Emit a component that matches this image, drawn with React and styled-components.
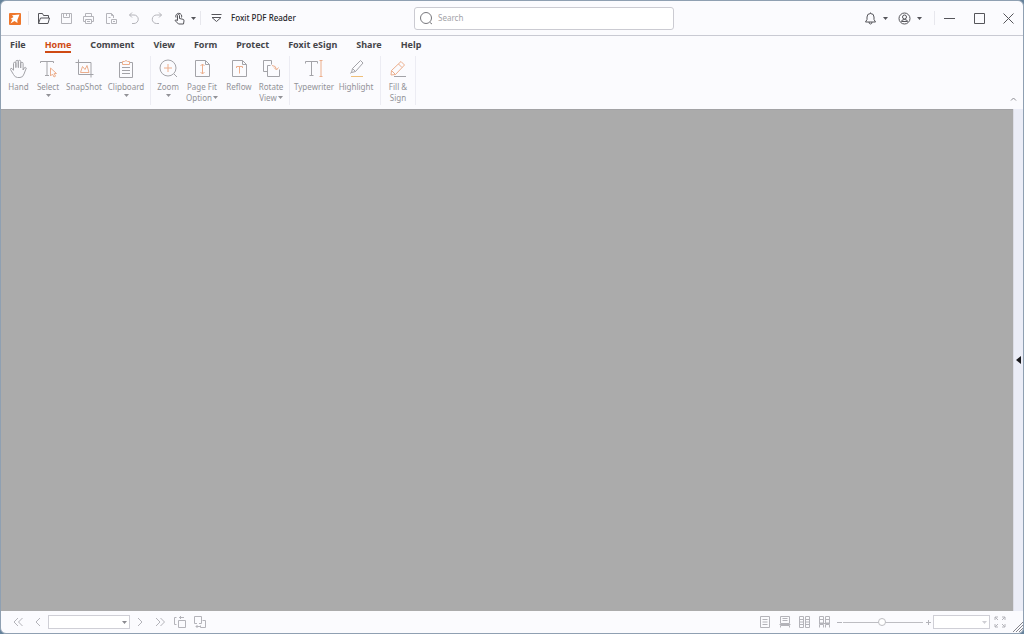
import React from "react";
import styled, { createGlobalStyle } from "styled-components";

const GlobalStyle = createGlobalStyle`
  * { box-sizing: border-box; }
  body { margin: 0; background: #66839c; }
  body, button, input, select { font-family: "Noto Sans", "Open Sans", sans-serif; }
`;

const Window = styled.div`
  display: flex;
  flex-direction: column;
  height: 100vh;
  border: 1px solid #8fa0b2;
  border-radius: 6px;
  overflow: hidden;
  background: #fbfbfe;
  color: #3c3c40;
`;

const TitleBar = styled.header`
  display: flex;
  align-items: center;
  height: 35px;
  flex: none;
  border-bottom: 1px solid #c9cad3;
`;

const TitleStart = styled.div`
  display: flex;
  align-items: center;
  flex: 0 1 413px;
  padding-left: 7px;
`;

const QuickTools = styled.div`
  display: grid;
  grid-template-columns: repeat(7, 1fr);
  width: 159px;
  margin-left: 3px;
`;

const IconButton = styled.button`
  display: flex;
  align-items: center;
  justify-content: center;
  flex: none;
  width: ${(p) => p.$w ? p.$w + "px" : "auto"};
  height: 20px;
  padding: 0;
  border: 0;
  background: none;
  color: ${(p) => (p.$dim ? "#b4b4ba" : "#55555a")};
`;

const Divider = styled.span`
  flex: none;
  width: 1px;
  height: 14px;
  background: #e7e7ed;
`;

const AppTitle = styled.h1`
  margin: 0;
  font-size: 8px;
  line-height: 12px;
  font-weight: 500;
  color: #26262a;
  white-space: nowrap;
`;

const SearchBox = styled.label`
  display: flex;
  align-items: center;
  gap: 5px;
  flex: 0 1 260px;
  height: 23px;
  padding: 0 5px;
  border: 1px solid #cbcbd2;
  border-radius: 3px;
  background: #fff;
  color: #77777c;
`;

const SearchInput = styled.input`
  flex: 1;
  min-width: 0;
  padding: 0;
  border: 0;
  outline: 0;
  background: none;
  font-size: 8px;
  line-height: 12px;
  &::placeholder { color: #a3a3a8; opacity: 1; }
`;

const TitleEnd = styled.div`
  display: flex;
  align-items: center;
  margin-left: auto;
`;

const Tabs = styled.nav`
  display: flex;
  gap: 19px;
  height: 20px;
  flex: none;
  padding: 2px 9px 0;
`;

const Tab = styled.a`
  height: 15px;
  border-bottom: 2px solid ${(p) => (p.$active ? "#cf4a14" : "transparent")};
  font-size: 9px;
  line-height: 14px;
  font-weight: 700;
  text-decoration: none;
  white-space: nowrap;
  color: ${(p) => (p.$active ? "#cf4a14" : "#454549")};
`;

const Ribbon = styled.div`
  display: flex;
  height: 53px;
  flex: none;
`;

const Group = styled.div`
  display: flex;
  height: 49px;
  padding: 0 3px;
  border-right: 1px solid #ececf3;
`;

const ToolButton = styled.button`
  display: flex;
  flex-direction: column;
  align-items: center;
  width: ${(p) => p.$w}px;
  padding: 3px 0 0;
  border: 0;
  background: none;
  color: #929297;
  font-size: 8px;
  line-height: 11px;
  white-space: nowrap;
`;

const ToolLabel = styled.span`
  display: flex;
  align-items: center;
  gap: 1px;
`;

const DropMark = styled.span`
  display: flex;
  padding-top: 2px;
`;

const IconSlot = styled.span`
  display: flex;
  height: 22px;
  color: #a3a3a8;
`;

const RibbonEnd = styled.div`
  display: flex;
  align-items: flex-end;
  margin-left: auto;
`;

const Workspace = styled.main`
  display: flex;
  flex: 1;
  min-height: 0;
`;

const Canvas = styled.section`
  flex: 1;
  background: #ababab;
  border-top: 1px solid #a2a2a5;
`;

const SideRail = styled.aside`
  display: flex;
  align-items: center;
  width: 10px;
  border-left: 1px solid #dcdde6;
  background: #ebedf7;
`;

const StatusBar = styled.footer`
  display: flex;
  align-items: center;
  justify-content: space-between;
  height: 22px;
  flex: none;
  padding-left: 7px;
`;

const StatusGroup = styled.div`
  display: flex;
  align-items: center;
`;

const Picker = styled.label`
  position: relative;
  display: flex;
  width: ${(p) => p.$w}px;
  color: ${(p) => (p.$dim ? "#cfcfd4" : "#8b8b90")};
  svg { position: absolute; right: 3px; top: 6px; pointer-events: none; }
`;

const Select = styled.select`
  width: 100%;
  height: 14px;
  padding: 0 10px 0 2px;
  border: 1px solid #cfcfd6;
  border-radius: 0;
  background: #fff;
  appearance: none;
  font-size: 8px;
`;

const ZoomSlider = styled.input`
  width: 80px;
  height: 12px;
  margin: 0;
  appearance: none;
  background: linear-gradient(#bdbdc2, #bdbdc2) center / 100% 1px no-repeat;
  &::-webkit-slider-thumb {
    appearance: none;
    width: 8px;
    height: 8px;
    border: 1px solid #bdbdc2;
    border-radius: 50%;
    background: #fff;
  }
`;

const ResizeCorner = styled.span`
  display: flex;
  align-self: flex-end;
`;

const Svg = ({ w = 14, h = w, vw = w, vh = h, children, ...rest }) => (
  <svg width={w} height={h} viewBox={`0 0 ${vw} ${vh}`} fill="none" stroke="currentColor" aria-hidden="true" {...rest}>
    {children}
  </svg>
);

const Caret = () => (
  <Svg w={5} h={3} fill="currentColor" stroke="none"><path d="M0 0h5L2.5 3z" /></Svg>
);

const OR = "#ecae8c";

const art = {
  folder: <path d="M1.5 11.5V1.500h4l1 2h5v2.500M1.500 11.500l2-5.500h9l-1.500 5.500z" />,
  save: <><path d="M1.5 1.5h10v10h-10zM3.5 1.5v4h6v-4M6.500 2v2" /></>,
  print: <path d="M3.5 4.5v-3h6v3M3.5 9.5h-2v-5h10v5h-2M3.5 7.5h6v4h-6zM5 9.5h3" />,
  doc: <><path d="M5 11.5H1.5v-10h5l2 2V6M6.5 1.5v2h2M3.5 5.5h2" /><path d="M6.5 7.5h5v4h-5zM8 9.5h2" /></>,
  undo: <path d="M4 .5L1.500 3 4 5.500M1.500 3H6a4.250 4.250 0 010 8.500H4" />,
  redo: <path d="M9 .5L11.500 3 9 5.500M11.500 3H6.500a4.250 4.250 0 000 8.500H9" />,
  touch: <path d="M3 5.500a3 3 0 115.500 0M4.500 8.500V3.500a1 1 0 012 0v3l3.500.8q1.200.4 1 1.500L10.500 12H5.500L2 8.500q.8-1.200 2.500 0" />,
};

const quick = [
  ["Open", "folder", false],
  ["Save", "save", true],
  ["Print", "print", true],
  ["Page setup", "doc", true],
  ["Undo", "undo", true],
  ["Redo", "redo", true],
  ["Touch mode", "touch", false],
];

const ribbonArt = {
  hand: <path d="M4.500 11V4.500a1.200 1.200 0 012.400 0V9M6.900 8V2.500a1.200 1.200 0 012.400 0V9M9.300 8V2.500a1.200 1.200 0 012.400 0V9M11.700 9V4.500a1.200 1.200 0 012.400 0V11l1-2q1.400-1.300 2.200 0l-2.300 6q-1 3.500-4 3.500H8.500q-2.500 0-4-3L1.500 10.500q0-1.800 1.500-1l1.500 2" />,
  select: <><path d="M1.500 4V2.500h13V4M8 2.500v14M6 16.500h4" /><path stroke={OR} d="M11.500 9v8l2-2 1.500 3 1.500-.8-1.300-2.700H17.500z" /></>,
  snap: <><path d="M3.500.5v15h15M.500 3.500h15.500v15" /><path stroke={OR} d="M5.500 13.500l2-6 2.500 3 2-4 2 7z" /></>,
  clip: <><path d="M5.500 3.500h-3v15h13v-15h-3" /><path stroke={OR} d="M5.500 2.500h2q1.500-2 3 0h2v3h-7z" /><path d="M5 8.500h8M5 11.500h8M5 14.500h8" /></>,
  zoom: <><circle cx="9" cy="9" r="8" /><path d="M15 15l3 3" /><path stroke={OR} d="M9 5v8M5 9h8" /></>,
  fit: <><path d="M2.500 1.500h10l4 4v12h-14zM12.500 1.500v4h4" /><path stroke={OR} d="M9.500 5v10M7.500 7l2-2 2 2M7.500 13l2 2 2-2" /></>,
  reflow: <><path d="M2.500 1.500h10l4 4v12h-14zM12.500 1.500v4h4" /><path stroke={OR} d="M6.500 9V7.500h6V9M9.500 7.500v7" /></>,
  rotate: <><path d="M5.500 12.500h-4v-11h8v4M8.500 6.500h-3v11h12v-7" /><path stroke={OR} d="M10 6.500q4 0 4.500 4M12 8.500l2.500 2.500 2-2.500" /></>,
  type: <><path d="M.500 4.500v-2h12v2M6.500 2.500v14M4.500 16.500h4" /><path stroke={OR} d="M14.500 1.500h3M16 1.500v16M14.500 17.500h3" /></>,
  highlight: <><path d="M5.500 9.500l8-8 2.500 2.500-7.500 8.500-4 1zM5.500 9.500l3 3M3.500 14.500l1-1.500" /><path stroke="#efbf79" d="M4 17.500h12" /></>,
  sign: <><path stroke={OR} d="M2.500 11.500l9.500-9 3.500 3.500-9 9.500-4.500.500zM9.500 5l3.500 3.500M2.500 11.500l4 4" /><path d="M5 17.500h12" /></>,
};

const groups = [
  [
    { icon: "hand", lines: ["Hand"], w: 29 },
    { icon: "select", lines: ["Select"], w: 30, drop: true },
    { icon: "snap", lines: ["SnapShot"], w: 42 },
    { icon: "clip", lines: ["Clipboard"], w: 42, drop: true },
  ],
  [
    { icon: "zoom", lines: ["Zoom"], w: 28, drop: true },
    { icon: "fit", lines: ["Page Fit", "Option"], w: 40, inline: true },
    { icon: "reflow", lines: ["Reflow"], w: 34 },
    { icon: "rotate", lines: ["Rotate", "View"], w: 30, inline: true },
  ],
  [
    { icon: "type", lines: ["Typewriter"], w: 42 },
    { icon: "highlight", lines: ["Highlight"], w: 42 },
  ],
  [{ icon: "sign", lines: ["Fill &", "Sign"], w: 28 }],
];

const tabs = ["File", "Home", "Comment", "View", "Form", "Protect", "Foxit eSign", "Share", "Help"];

const navArt = {
  first: <path d="M6 2L2 6l4 4M10.500 2l-4 4 4 4" />,
  prev: <path d="M8 2L4 6l4 4" />,
  next: <path d="M4 2l4 4-4 4" />,
  last: <path d="M2 2l4 4-4 4M6.500 2l4 4-4 4" />,
  back: <><path d="M4.500 4.500h7v7h-7zM2.500 8.500h-2v-7h2M5 1.500h5M7 0L5.500 1.500 7 3" /></>,
  forward: <><path d="M8.500 4.500h3v7h-5v-2M3 7.500H.500v-7h7v7H5M2 10.500h4M3.500 9L2 10.500 3.500 12" /></>,
};

const viewModes = [
  ["Single page", <path d="M1.500.5h9v11h-9zM3.500 3.500h5M3.500 6h5M3.500 8.500h5" />],
  ["Continuous", <path d="M1.500.5h9v7h-9zM3.500 2.500h5M3.500 4.500h5M1.500 11.500v-2h9v2M.500 8.500h11" />],
  ["Facing", <path d="M.500.5h4v11h-4zM6.500.5h4v11h-4zM1 3.500h3M1 6h3M1 8.500h3M7 3.500h3M7 6h3M7 8.500h3" />],
  ["Continuous facing", <path d="M.500.5h4v6.500h-4zM6.500 .5h4v6.500h-4zM.500 11.500v-3h4v3M6.500 11.500v-3h4v3M1 3.500h3M7 3.500h3M0 7.500h11" />],
];

function NavButton({ label, icon, w = 22 }) {
  return <IconButton $dim $w={w} aria-label={label}><Svg w={12}>{navArt[icon]}</Svg></IconButton>;
}

export default function App() {
  return (
    <Window>
      <GlobalStyle />
      <TitleBar>
        <TitleStart>
          <Svg w={13} stroke="none">
            <rect x="1" y="1" width="12" height="12" rx="1" fill="#ee762b" />
            <path d="M11.500 2.500L4 3.200 5.500 5 2.500 7l2 .5-2 4 4-2.500L9.500 11 9.300 8z" fill="#fff" />
          </Svg>
          <IconButton as="span" $w={7} />
          <Divider />
          <QuickTools>
            {quick.map(([label, icon, dim]) => (
              <IconButton key={icon} $dim={dim} aria-label={label}><Svg w={13}>{art[icon]}</Svg></IconButton>
            ))}
          </QuickTools>
          <IconButton $w={5} aria-label="Touch mode options"><Caret /></IconButton>
          <IconButton as="span" $w={4} />
          <Divider />
          <IconButton $w={30} aria-label="Customize toolbar">
            <Svg w={11} h={10}><path d="M.500 1.500h10M1 4.500h9L5.500 8.500z" /></Svg>
          </IconButton>
          <AppTitle>Foxit PDF Reader</AppTitle>
        </TitleStart>
        <SearchBox>
          <Svg w={13}><circle cx="6" cy="6" r="5.500" /><path d="M10 10.500l2 1.500" /></Svg>
          <SearchInput type="search" placeholder="Search" aria-label="Search" />
        </SearchBox>
        <TitleEnd>
          <IconButton $w={18} aria-label="Notifications">
            <Svg w={13}><path d="M1.500 10h10L10 7.500V5a3.500 3.500 0 00-7 0v2.500zM5 10q0 2 1.500 2T8 10M6.500 1.500V.500" /></Svg>
          </IconButton>
          <IconButton $w={12} aria-label="Notification options"><Caret /></IconButton>
          <IconButton $w={26} aria-label="Account">
            <Svg w={13}><circle cx="6.500" cy="6.500" r="5.500" /><circle cx="6.500" cy="5" r="2" /><path d="M3.500 9.500q0-2 3-2t3 2z" /></Svg>
          </IconButton>
          <IconButton $w={5} aria-label="Account options"><Caret /></IconButton>
          <IconButton as="span" $w={12} />
          <Divider />
          <IconButton $w={29} aria-label="Minimize"><Svg w={11}><path d="M0 5.500h11" /></Svg></IconButton>
          <IconButton $w={30} aria-label="Maximize"><Svg w={11}><path d="M.500.500h10v10h-10z" /></Svg></IconButton>
          <IconButton $w={29} aria-label="Close"><Svg w={11}><path d="M.500.500l10 10M10.500.500l-10 10" /></Svg></IconButton>
        </TitleEnd>
      </TitleBar>

      <Tabs aria-label="Ribbon tabs">
        {tabs.map((t) => (
          <Tab key={t} href={"#" + t.replace(" ", "-")} $active={t === "Home"}>{t}</Tab>
        ))}
      </Tabs>

      <Ribbon>
        {groups.map((tools, i) => (
          <Group key={i}>
            {tools.map((t) => (
              <ToolButton key={t.icon} $w={t.w}>
                <IconSlot><Svg w={19}>{ribbonArt[t.icon]}</Svg></IconSlot>
                {t.lines.map((line, n) => (
                  <ToolLabel key={line}>{line}{t.inline && n === 1 && <Caret />}</ToolLabel>
                ))}
                {t.drop && <DropMark><Caret /></DropMark>}
              </ToolButton>
            ))}
          </Group>
        ))}
        <RibbonEnd>
          <IconButton $w={19} aria-label="Collapse ribbon">
            <Svg w={7} h={4} stroke="#8d8d93"><path d="M1 3.500L3.500 1 6 3.500" /></Svg>
          </IconButton>
        </RibbonEnd>
      </Ribbon>

      <Workspace>
        <Canvas aria-label="Document" />
        <SideRail>
          <IconButton $w={9} aria-label="Expand side panel">
            <Svg w={5} h={8} fill="#18181b" stroke="none"><path d="M5 0v8L0 4z" /></Svg>
          </IconButton>
        </SideRail>
      </Workspace>

      <StatusBar>
        <StatusGroup>
          <NavButton label="First page" icon="first" w={19} />
          <NavButton label="Previous page" icon="prev" w={21} />
          <Picker $w={82}>
            <Select aria-label="Page" defaultValue=""><option value="" /></Select>
            <Caret />
          </Picker>
          <NavButton label="Next page" icon="next" w={20} />
          <NavButton label="Last page" icon="last" w={20} />
          <NavButton label="Previous view" icon="back" w={20} />
          <NavButton label="Next view" icon="forward" w={20} />
        </StatusGroup>
        <StatusGroup>
          {viewModes.map(([label, drawing]) => (
            <IconButton key={label} $dim $w={20} aria-label={label}><Svg w={12}>{drawing}</Svg></IconButton>
          ))}
          <IconButton $dim $w={8} aria-label="Zoom out"><Svg w={7}><path d="M1 3.500h5" /></Svg></IconButton>
          <ZoomSlider type="range" min="0" max="100" defaultValue="49" aria-label="Zoom level" />
          <IconButton $dim $w={10} aria-label="Zoom in"><Svg w={7}><path d="M1 3.500h5M3.500 1v5" /></Svg></IconButton>
          <Picker $w={57} $dim>
            <Select aria-label="Zoom percentage" defaultValue=""><option value="" /></Select>
            <Caret />
          </Picker>
          <IconButton $dim $w={20} aria-label="Full screen">
            <Svg w={12}><path d="M1 4V1h3M8 1h3v3M11 8v3H8M4 11H1V8M1 1l3 3M11 1L8 4M11 11L8 8M1 11l3-3" /></Svg>
          </IconButton>
          <IconButton as="span" $w={3} />
          <ResizeCorner>
            <Svg w={10} stroke="#85858c"><path d="M0 10L10 0M3 10l7-7M6 10l4-4" /></Svg>
          </ResizeCorner>
        </StatusGroup>
      </StatusBar>
    </Window>
  );
}
